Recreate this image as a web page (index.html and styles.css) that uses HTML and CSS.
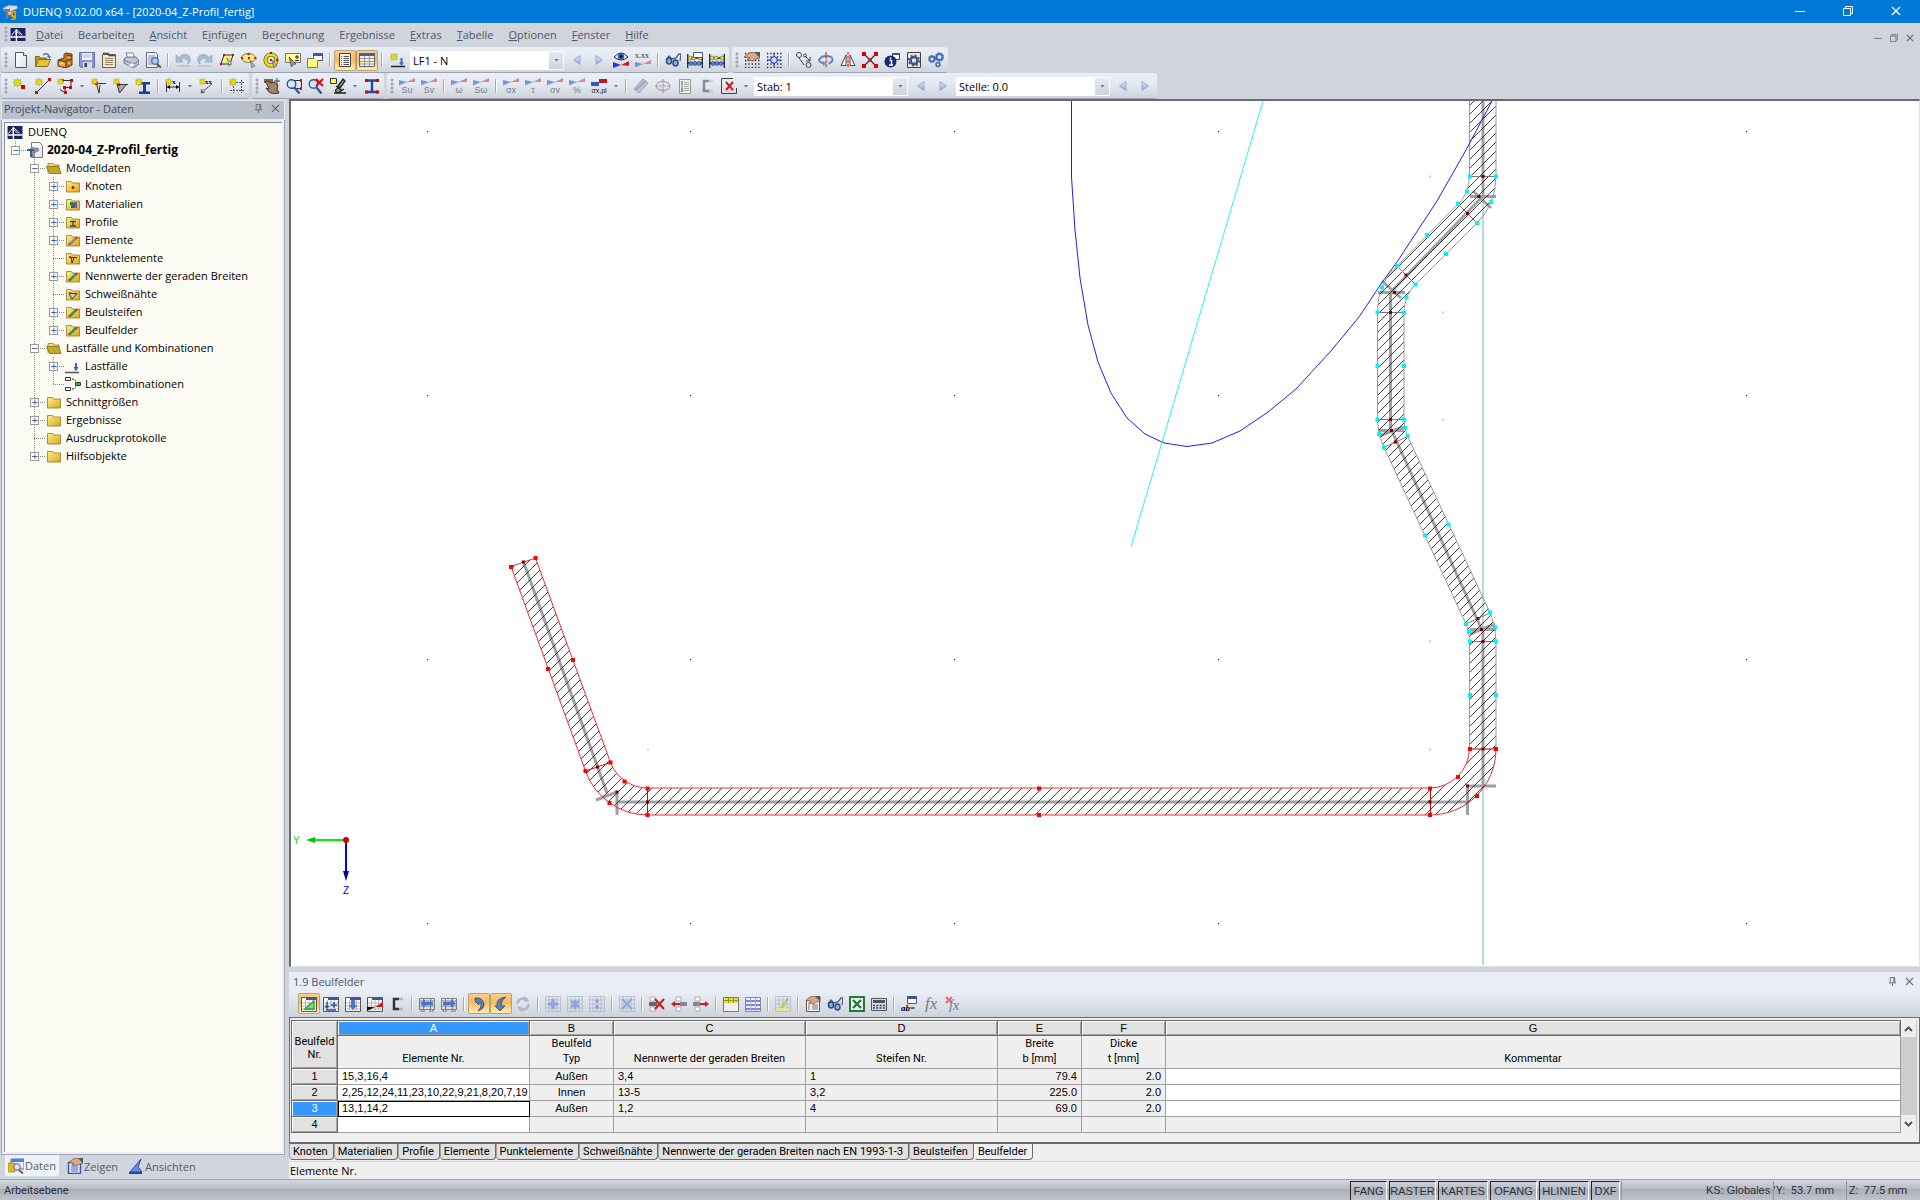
FILE: index.html
```html
<!DOCTYPE html>
<html lang="de">

<head>
    <meta charset="UTF-8">
    <title>DUENQ 9.02.00 x64 - [2020-04_Z-Profil_fertig]</title>
    <link rel="stylesheet" href="styles.css">
</head>

<body>
    <!-- icon shapes -->
    <svg class="sprite" aria-hidden="true">
        <defs>
            <linearGradient id="gold" x1="0" y1="0" x2="1" y2="1">
                <stop offset="0" stop-color="#fff08a" />
                <stop offset="1" stop-color="#d8a818" />
            </linearGradient>
            <linearGradient id="paper" x1="0" y1="0" x2="1" y2="1">
                <stop offset="0" stop-color="#fff" />
                <stop offset="1" stop-color="#dfe3ec" />
            </linearGradient>
            <linearGradient id="blue" x1="0" y1="0" x2="0" y2="1">
                <stop offset="0" stop-color="#e8efff" />
                <stop offset="1" stop-color="#86a2e8" />
            </linearGradient>
        </defs>
        <symbol id="star" viewBox="0 0 8 8"><path d="M4 0 5 2.3 7.2 1 6.2 3.4 8 4 6.2 4.8 7.2 7 5 6 4 8 3 6 .8 7 1.8 4.8 0 4 1.8 3.4.8 1 3 2.3Z" fill="#e8e000" stroke="#8a8a20" stroke-width=".4" /></symbol>
        <symbol id="logo" viewBox="0 0 16 14"><path d="M0 0h16v14H0Z" fill="#1c2266" /><path d="M0 9h16v1.5H0ZM5.5 1h1.5v13H5.5Z" fill="#fff" /><path d="M1 8 6 2v6M7 2l6 6M7 4l4 4" stroke="#fff" fill="none" /></symbol>
        <symbol id="app" viewBox="0 0 16 16"><path d="m1 4 6-3 9 1-1 3-5 2v4H6V7L2 8Z" fill="#d6d9de" stroke="#7d828c" stroke-width=".7" /><path d="M2 5h6v3H6v7H4V8H2Z" fill="#777c88" /><path d="M9 7h5v7q0 2-3 2H9v-1.500h2.500V13H9Zm2 1.500v3h1.500v-3Z" fill="#f0b020" fill-rule="evenodd" stroke="#a06c00" stroke-width=".4" /></symbol>
        <symbol id="new" viewBox="0 0 16 16"><path d="M2.500.500h8l3 3v12h-11Z" fill="url(#paper)" stroke="#555" /><path d="M10.500.500v3h3" fill="#fff" stroke="#555" /></symbol>
        <symbol id="open" viewBox="0 0 16 16"><path d="M.500 14.500v-10h4l1 1.500h6v2" fill="#b59a20" stroke="#857018" /><path d="m.500 14.500 3-7h12l-3 7Z" fill="#ddc445" stroke="#857018" /><path d="M8 3q4-3 6 1" fill="none" stroke="#4a7aa8" stroke-width="1.500" /><path d="M12 4h4l-1.500 3Z" fill="#4a7aa8" /></symbol>
        <symbol id="cabinet" viewBox="0 0 16 16"><path d="m1 8 6-2V2l2-1 6 1v11l-6 3-8-2Z" fill="#c07c28" stroke="#6a3c08" /><path d="m1 8 8 1.500V16M9 3l6 1M9 9l6-2" fill="none" stroke="#6a3c08" /><path d="m2 9.500 6 1v4l-6-1Z" fill="#e8b060" /><path d="M4 11.500h2M11 5.500h2M11 11h2" stroke="#fff3c0" /></symbol>
        <symbol id="save" viewBox="0 0 16 16"><path d="M.500.500h15v15H2l-1.500-1.500Z" fill="#8d93d8" stroke="#666cb4" /><path d="M3 1h10v7H3Z" fill="#f4f4f8" /><path d="M4 3h8M4 5h8" stroke="#bbb" /><path d="M4 10h9v6H4Z" fill="#d5d8e6" /><path d="M5.500 11h2.500v4H5.500Z" fill="#333a66" /></symbol>
        <symbol id="list" viewBox="0 0 16 16"><path d="M1.500 2.500h13v13h-13Z" fill="#f2e5d2" stroke="#74604a" /><path d="M2 1.500h5l1 2h6" stroke="#54483c" fill="none" stroke-width="1.500" /><path d="M4 6.500h8M4 8.500h8M4 10.500h8M4 12.500h8" stroke="#9c8468" /></symbol>
        <symbol id="print" viewBox="0 0 16 16"><path d="M3 1h7l2 6H5Z" fill="#fff" stroke="#667" stroke-width=".8" /><path d="m1 7 3-2h9l3 4v3l-6 4-9-5Z" fill="#c2c5d8" stroke="#555a70" stroke-width=".8" /><path d="m1 8 9 4 6-3M10 12v4" stroke="#555a70" fill="none" stroke-width=".7" /><path d="m5 13 4-2 3 2-3 2.500Z" fill="#fff" stroke="#99a" stroke-width=".5" /></symbol>
        <symbol id="preview" viewBox="0 0 16 16"><path d="M1.500.500h9l2 2v13h-11Z" fill="url(#paper)" stroke="#667" /><path d="M3 4h7M3 6h5M3 8h3M3 10h3M3 12h4" stroke="#98a" /><circle cx="10" cy="9" r="3.300" fill="#a8ccf0" stroke="#3d72ac" stroke-width="1.300" /><path d="m12 12 4 3.500" stroke="#555" stroke-width="2" /></symbol>
        <symbol id="undo" viewBox="0 0 16 16"><path d="M1 3v7h7L5.500 7.500Q9 5 12.500 8 14 10 13 12q4-4 1-8Q9 0 4 5.500Z" fill="#aabcd2" stroke="#8398b2" stroke-width=".6" /><path d="M2 14h13" stroke="#a8b2c0" /></symbol>
        <symbol id="skew" viewBox="0 0 16 16"><path d="M5 3h9l-3 9H2Z" fill="#f4f080" stroke="#333" /><path d="M4 2h2v2H4ZM13 2h2v2h-2ZM1 11h2v2H1ZM10 11h2v2h-2Z" fill="#d00" /><path d="m8 6 5 6-2 .3-1 2Z" fill="#ccc" stroke="#555" stroke-width=".6" /></symbol>
        <symbol id="lasso" viewBox="0 0 16 16"><ellipse cx="7.500" cy="6" rx="7" ry="4.500" fill="#f6ee70" stroke="#777" /><path d="M0 5h2v2H0ZM6.500 1h2v2h-2ZM13.500 5h2v2h-2ZM7 5h2v2H7Z" fill="#e00" /><path d="m9 8 5 6-2 .3-1 1.700Z" fill="#bbb" stroke="#555" stroke-width=".6" /></symbol>
        <symbol id="ring" viewBox="0 0 16 16"><circle cx="8" cy="8" r="5.500" fill="none" stroke="#333" stroke-width="4" /><circle cx="8" cy="8" r="5.500" fill="none" stroke="#efe000" stroke-width="2.800" /><path d="M7 7h2v2H7ZM7 0h2v2H7ZM13 7h2v2h-2Z" fill="#d00" /><path d="m9 8 5 6-2 .3-1 1.700Z" fill="#bbb" stroke="#555" stroke-width=".6" /></symbol>
        <symbol id="pickbox" viewBox="0 0 16 16"><path d="M.500 1.500h15v9H.500Z" fill="#ffff96" stroke="#777" /><path d="M10 5h4M12 3v4M10 8.500h4" stroke="#222" /><path d="m4 5 7 7-3 .3L6.500 15Z" fill="#999" stroke="#333" stroke-width=".7" /></symbol>
        <symbol id="notes" viewBox="0 0 16 16"><path d="M.500 6.500h10v9H.500Z" fill="#ffff80" stroke="#777" /><path d="M6.500 5.500v-4h9v7h-5" fill="#fff" stroke="#555" /><path d="M6 1h10v3H6Z" fill="#3a5f9c" /></symbol>
        <symbol id="doclist" viewBox="0 0 16 16"><path d="M2.500 1.500h11v13h-11Z" fill="#f7f7f0" stroke="#444" /><path d="M4 4.500h1M6.500 4.500H12M4 6.500h1M6.500 6.500H12M4 8.500h1M6.500 8.500H12M4 10.500h1M6.500 10.500H12M4 12.500h1M6.500 12.500H12" stroke="#555" /></symbol>
        <symbol id="tbl" viewBox="0 0 16 16"><path d="M.500 1.500h15v13H.500Z" fill="#f7f2e4" stroke="#666" /><path d="M0 1h16v3H0Z" fill="#3c62a8" /><path d="M1 6.500h14M1 9.500h14M1 12h14M5.500 4v10M10.500 4v10" stroke="#999" /></symbol>
        <symbol id="loadnew" viewBox="0 0 16 16"><use href="#star" x="1" y="1" width="8" height="8" /><path d="M2 14.500h14" stroke="#222" stroke-width="1.500" /><path d="M11.500 6h2v4.500H15L12.500 14 10 10.500h1.500Z" fill="#3a6fd0" /></symbol>
        <symbol id="left" viewBox="0 0 16 16"><path d="M11 3.500v9L4.500 8Z" fill="url(#blue)" stroke="#9aa9cc" /></symbol>
        <symbol id="right" viewBox="0 0 16 16"><path d="M5 3.500v9L11.500 8Z" fill="url(#blue)" stroke="#9aa9cc" /></symbol>
        <symbol id="ramp" viewBox="0 0 16 16"><path d="M0 2v5.500L8 4Z" fill="#6d96d8" /><path d="M16 0v4H8Z" fill="#e08080" /><path d="M0 6.500 16 1.500" stroke="#aaa" stroke-width=".5" /></symbol>
        <symbol id="eye" viewBox="0 0 16 16"><path d="M1 5q7-8 14 0-7 6-14 0Z" fill="#eef" stroke="#222" /><circle cx="8" cy="4.500" r="3.200" fill="#2a62c0" /><circle cx="8" cy="4.500" r="1.300" /><path d="M0 10v6l8-3Z" fill="#1b3fd8" /><path d="M16 9v5l-8-1Z" fill="#d81818" /></symbol>
        <symbol id="glasses" viewBox="0 0 16 16"><path d="m1 8 3-4 3 3 4-1 3-4h2l-1 7" fill="none" stroke="#4b5d86" stroke-width="1.300" /><ellipse cx="4" cy="9" rx="2.500" ry="3" fill="#8eaee8" stroke="#33487c" stroke-width="1.500" /><ellipse cx="10.500" cy="11" rx="2.500" ry="3" fill="#8eaee8" stroke="#33487c" stroke-width="1.500" /></symbol>
        <symbol id="abacus" viewBox="0 0 16 16"><path d="M.750 2v14M15.250 2v14M0 6h16M0 11h16" stroke="#222" stroke-width="1.300" fill="none" /><circle cx="3" cy="6" r="2" fill="#ecd860" stroke="#665a10" stroke-width=".6" /><circle cx="7" cy="6" r="2" fill="#ecd860" stroke="#665a10" stroke-width=".6" /><circle cx="13" cy="6" r="2" fill="#ecd860" stroke="#665a10" stroke-width=".6" /><circle cx="4" cy="11.500" r="2" fill="#5f86dc" stroke="#1c3478" stroke-width=".6" /><circle cx="8" cy="11.500" r="2" fill="#5f86dc" stroke="#1c3478" stroke-width=".6" /><circle cx="12" cy="11.500" r="2" fill="#5f86dc" stroke="#1c3478" stroke-width=".6" /></symbol>
        <symbol id="dots" viewBox="0 0 16 16"><path d="M1 1.500h15M1 5h15M1 8.500h15M1 12h15M1 15.300h15" stroke="#222" stroke-width="1.300" stroke-dasharray="1.300 2" /></symbol>
        <symbol id="hand" viewBox="0 0 16 9"><path d="m0 5 5-4 5-1 6 1v5l-4 1-4 2-5-1 3-2Z" fill="#dba980" stroke="#604028" stroke-width=".7" /><path d="M10 0h6v6Z" fill="#555" /></symbol>
        <symbol id="griphand" viewBox="0 0 16 16"><use href="#dots" /><use href="#hand" width="16" height="9" /></symbol>
        <symbol id="snap" viewBox="0 0 16 16"><use href="#dots" /><path d="M8 1v14M1 8h14" stroke="#1a2ecc" /><circle cx="8" cy="8" r="3.300" fill="#cfd8ff" stroke="#1a2ecc" /></symbol>
        <symbol id="copy" viewBox="0 0 16 16"><circle cx="3" cy="3" r="2.500" fill="none" stroke="#444" /><circle cx="9" cy="3.500" r="1.500" fill="none" stroke="#444" /><circle cx="12.500" cy="13" r="2.500" fill="none" stroke="#444" /><path d="m9 4 5 5M14 5v4h-4M3 6l5 7" stroke="#444" fill="none" /></symbol>
        <symbol id="rotate" viewBox="0 0 16 16"><path d="M6 11.500Q0 10 1.500 7 4 3.500 9 4q6 .5 5.500 4-.5 2.500-4 3.500" fill="none" stroke="#6088c8" stroke-width="2" /><path d="M8 0v16" stroke="#e00" stroke-dasharray="3 1" /><path d="m5 9 3 2.500L5 14Z" fill="#6088c8" /></symbol>
        <symbol id="mirror" viewBox="0 0 16 16"><path d="M6 3v10.500H1ZM10 3v10.500h5Z" fill="#fff" stroke="#444" /><path d="M8 0v16" stroke="#e00" stroke-dasharray="3 1" /></symbol>
        <symbol id="cross" viewBox="0 0 16 16"><path d="m2 2 12 12M14 2 2 14" stroke="#333" stroke-width="1.300" /><path d="M0 0h4v4H0ZM12 0h4v4h-4ZM0 12h4v4H0ZM12 12h4v4h-4ZM6.500 6.500h3v3h-3Z" fill="#d00" /></symbol>
        <symbol id="info" viewBox="0 0 16 16"><path d="M8.500 1.500h7v6h-7Z" fill="#fff" stroke="#345" /><path d="M8 1h8v2H8Z" fill="#3b5b90" /><circle cx="6.500" cy="9.500" r="6" fill="#182878" /><path d="M5.500 8.500h2V13M5 13h4M6.500 5.500v1.700" stroke="#fff" stroke-width="1.500" /></symbol>
        <symbol id="gear" viewBox="0 0 16 16"><path d="M1.500.500h13v15h-13Z" fill="#f2e5d0" stroke="#443" /><circle cx="8" cy="8.500" r="3.500" fill="none" stroke="#36579a" stroke-width="2.600" /><circle cx="8" cy="8.500" r="5.300" fill="none" stroke="#36579a" stroke-width="1.600" stroke-dasharray="2 2.150" /></symbol>
        <symbol id="gears" viewBox="0 0 16 16"><g fill="none" stroke="#4169b4"><circle cx="4" cy="7" r="2.500" stroke-width="1.800" /><circle cx="11.500" cy="5" r="3" stroke-width="2" /><circle cx="10" cy="12.500" r="2" stroke-width="1.600" /><circle cx="4" cy="7" r="3.600" stroke-dasharray="1.500 1.500" /><circle cx="11.500" cy="5" r="4.300" stroke-dasharray="1.500 1.500" /></g></symbol>

        <symbol id="node" viewBox="0 0 16 16"><use href="#star" width="9" height="9" /><path d="M8 7h4v4H8Z" fill="#d40000" /></symbol>
        <symbol id="line" viewBox="0 0 16 16"><path d="m2 14 12-12" stroke="#333" /><path d="M13 0h3v3h-3ZM0 13h3v3H0Z" fill="#d00" /><use href="#star" width="8" height="8" /></symbol>
        <symbol id="poly" viewBox="0 0 16 16"><path d="M5 2.500h9v7H8v5l-5-3" fill="none" stroke="#333" /><path d="M4 1h3v3H4ZM13 1h3v3h-3ZM12 8h3v3h-3ZM6 8h3v3H6ZM7 13h3v3H7Z" fill="#d00" /><use href="#star" width="7" height="7" /></symbol>
        <symbol id="point" viewBox="0 0 16 16"><path d="M2 5.500h13M5 4l3 11 1-8" fill="none" stroke="#333" /><path d="M4 4h3v3H4Z" fill="#d00" /><use href="#star" width="7" height="7" /></symbol>
        <symbol id="weld" viewBox="0 0 16 16"><path d="M4 6.500h11M4 6l2.500 9L13 7" fill="#aaa" stroke="#333" /><path d="M4 5h3v3H4Z" fill="#d00" /><use href="#star" width="7" height="7" /></symbol>
        <symbol id="ibeam" viewBox="0 0 16 16"><path d="M4 4h11v2.500h-4v7h4V16H4v-2.500h4v-7H4Z" fill="#1d3f9c" /><use href="#star" width="8" height="8" /></symbol>
        <symbol id="dim" viewBox="0 0 16 16"><path d="M1.500 4v10M14.500 4v10M2 9h12" stroke="#333" /><path d="m2 9 3-2v4ZM14 9l-3-2v4Z" /><use href="#star" width="7" height="7" /></symbol>
        <symbol id="coord" viewBox="0 0 16 16"><path d="M3 14 13 6M2 15l1-4M2 15l4-1" stroke="#555" /><use href="#star" width="7" height="7" /></symbol>
        <symbol id="frame" viewBox="0 0 16 16"><path d="M4.500 2v13M12.500 2v13M1 4.500h15M1 12.500h15" stroke="#555" stroke-dasharray="2 1" /><use href="#star" width="8" height="8" /></symbol>
        <symbol id="pan" viewBox="0 0 16 16"><path d="M0 1h9v4H0Z" fill="#7b6a54" /><path d="M3 6 1 4l3-1 3 2 3-1 4 3-1 4 2 4-6 1-4-2-3-4 3 1Z" fill="#a08468" stroke="#403428" /><path d="M10 3h6M13 0v6" stroke="#444" /></symbol>
        <symbol id="zoomw" viewBox="0 0 16 16"><path d="M4.500 2.500h11v8h-11Z" fill="none" stroke="#333" /><path d="M14 1h2v3h-2ZM14 9h2v3h-2Z" fill="#b22" /><circle cx="5.500" cy="6" r="4.300" fill="#d5e4ff" stroke="#3552a0" stroke-width="1.400" /><path d="m8.500 9.500 5 6" stroke="#3552a0" stroke-width="2.300" /></symbol>
        <symbol id="zoomx" viewBox="0 0 16 16"><circle cx="5.500" cy="6" r="4.300" fill="#d5e4ff" stroke="#3552a0" stroke-width="1.400" /><path d="m8.500 9.500 5 6" stroke="#3552a0" stroke-width="2.300" /><path d="m8 1 7 7M15 1 8 8" stroke="#d01010" stroke-width="2" /></symbol>
        <symbol id="view" viewBox="0 0 16 16"><path d="M.500.500h6v5h-6Z" fill="#ffff40" stroke="#333" /><path d="m8 8 5-7 2 2-5 7ZM6 8l5 4M4 15h12M8 10q-5 3 0 5l6-4" fill="#999" stroke="#222" stroke-width="1.300" /></symbol>
        <symbol id="ired" viewBox="0 0 16 16"><path d="M2 2.500h12M2 14h12M8 2v12" stroke="#24479c" stroke-width="2.400" /><path d="M1 1h3v3H1ZM12 1h3v3h-3ZM1 12.500h3v3H1ZM12 12.500h3v3h-3Z" fill="#d00" /></symbol>
        <symbol id="stress" viewBox="0 0 16 16"><path d="M0 4h8v4H0Z" fill="#2c59c4" /><path d="M8 1h8v4H8Z" fill="#c41818" /></symbol>
        <symbol id="bar" viewBox="0 0 16 16"><path d="m1 11 9-10 5 4-9 10Z" fill="#b4c4de" stroke="#99a2b2" /><path d="m3 12 9-9" stroke="#d08888" stroke-width="1.500" /></symbol>
        <symbol id="ellipse" viewBox="0 0 16 16"><ellipse cx="8" cy="8" rx="7" ry="4.500" fill="none" stroke="#8d93a0" /><path d="M0 8h16M8 1v14" stroke="#d0848a" stroke-dasharray="3 1" /></symbol>
        <symbol id="legend" viewBox="0 0 16 16"><path d="M2.500 1.500h11v14h-11Z" fill="#eee" stroke="#999" /><path d="M4 3h2v3H4Z" fill="#d88" /><path d="M4 6h2v4H4Z" fill="#8c8" /><path d="M4 10h2v4H4Z" fill="#88d" /><path d="M7 4.500h5M7 6.500h5M7 8.500h5M7 10.500h5M7 12.500h5" stroke="#aaa" /></symbol>
        <symbol id="channel" viewBox="0 0 16 16"><path d="M10 3H5v10h5" fill="none" stroke="#333" stroke-width="2.500" /><path d="M10 3h4M10 13h4" stroke="#b5b5a8" stroke-width="2.500" /></symbol>
        <symbol id="boxx" viewBox="0 0 16 16"><path d="M12 .500H.500v15h15V10" fill="none" stroke="#444" /><path d="m5 4 7 8M12 4l-7 8" stroke="#cc1c1c" stroke-width="2" /></symbol>

        <symbol id="folder" viewBox="0 0 16 16"><path d="M1.500 3.500h5l1 1.500h7v9h-13Z" fill="url(#gold)" stroke="#8f7a22" stroke-width=".8" /></symbol>
        <symbol id="folderopen" viewBox="0 0 16 16"><path d="M2 13V3.500h5L8 5h5v8" fill="#f0dc70" stroke="#8f7a22" stroke-width=".8" /><path d="M.500 6.500h12l2.500 7H3.500Z" fill="#c4a82c" stroke="#7c6818" stroke-width=".8" /></symbol>
        <symbol id="model" viewBox="0 0 16 16"><path d="M4.500.500h8l3 3v12h-11Z" fill="url(#paper)" stroke="#777" /><path d="m1 8 4-3 7 1v3l-4 2v4H5V9Z" fill="#888d99" /><path d="M0 7h7v2H5v6H3V9H0Z" fill="#3a5c9c" /></symbol>
        <symbol id="combi" viewBox="0 0 16 16"><path d="M.500 1.500h5v3h-5ZM.500 11.500h5v3h-5Z" fill="#fff" stroke="#333" /><path d="M7 3q4 0 4 3M7 13q4 0 4-3" fill="none" stroke="#333" stroke-dasharray="2 1" /><path d="M10.500 6.500h5v3h-5Z" fill="#2fb04a" stroke="#145a20" /></symbol>

        <symbol id="sheet" viewBox="0 0 16 16"><path d="M.500 1.500h15v14H.500Z" fill="#fff" stroke="#555" /><path d="M1 7h14M1 10h14M1 13h14M4.500 4v12M8 4v12M11.500 4v12" stroke="#999" stroke-width=".7" /><path d="M5 1h11v3H5Z" fill="#3c5a9a" /></symbol>
        <symbol id="s-edit" viewBox="0 0 16 16"><use href="#sheet" /><path d="M4 13 13 5v8Z" fill="#7fe070" stroke="#2f9a38" stroke-width="1.300" /></symbol>
        <symbol id="s-num" viewBox="0 0 16 16"><use href="#sheet" /><path d="M4 6v6M2 10l2 2 2-2M8 9h6M11 6v6M3 14h10" stroke="#2b52a4" stroke-width="1.500" fill="none" /></symbol>
        <symbol id="s-down" viewBox="0 0 16 16"><use href="#sheet" /><path d="M6 4h4v5h2.500L8 14 3.500 9H6Z" fill="#4a72c8" /></symbol>
        <symbol id="s-ramp" viewBox="0 0 16 16"><use href="#sheet" /><path d="M0 11v4l8-4Z" fill="#111" /><path d="M16 6v5H8Z" fill="#d41818" /></symbol>
        <symbol id="s-left" viewBox="0 0 16 16"><path d="M.500 2.500h15v11H.500ZM1 5h14M1 10h14M4.500 3v10M11.500 3v10M2 14v2h3v-2M11 14v2h3v-2" fill="none" stroke="#666" stroke-width=".8" /><path d="m1 7.500 5-4V6h8v3H6v2.500Z" fill="#4a74d4" /></symbol>
        <symbol id="s-right" viewBox="0 0 16 16"><path d="M.500 2.500h15v11H.500ZM1 5h14M1 10h14M4.500 3v10M11.500 3v10M2 14v2h3v-2M11 14v2h3v-2" fill="none" stroke="#666" stroke-width=".8" /><path d="m15 7.500-5-4V6H2v3h8v2.500Z" fill="#4a74d4" /></symbol>
        <symbol id="arcr" viewBox="0 0 16 16"><path d="M4 2h4q5 2 5 7 0 4-6 6 4-4 3-8L8 6v3L4 5Z" fill="#5c80b0" stroke="#28477a" stroke-width=".8" /></symbol>
        <symbol id="arcl" viewBox="0 0 16 16"><path d="M13 1Q3 2 4 10H2l5 5 5-5H9Q7 5 13 1Z" fill="#5c80b0" stroke="#28477a" stroke-width=".8" /></symbol>
        <symbol id="sync" viewBox="0 0 16 16"><circle cx="8" cy="8" r="5.500" fill="none" stroke="#a8b8d4" stroke-width="2.500" stroke-dasharray="14 3.200" /><path d="m9 0 4 3-4 3ZM7 10v6l-4-3Z" fill="#a8b8d4" /></symbol>
        <symbol id="s-dim" viewBox="0 0 16 16"><path d="M.500.500h15v15H.500ZM1 4h14M1 8h14M1 12h14M4 1v14M8 1v14M12 1v14" fill="none" stroke="#b2b7c2" stroke-width=".8" /></symbol>
        <symbol id="d-plus" viewBox="0 0 16 16"><use href="#s-dim" /><path d="M8 3v10M3 8h10" stroke="#8ea4e4" stroke-width="3.500" /></symbol>
        <symbol id="d-star" viewBox="0 0 16 16"><use href="#s-dim" /><path d="m4 5 8 6M12 5l-8 6M8 4v9" stroke="#8ea4e4" stroke-width="2.500" /></symbol>
        <symbol id="d-dots" viewBox="0 0 16 16"><use href="#s-dim" /><circle cx="8" cy="5" r="2" fill="#8ea4e4" /><circle cx="8" cy="11" r="2" fill="#8ea4e4" /></symbol>
        <symbol id="d-x" viewBox="0 0 16 16"><use href="#s-dim" /><path d="m3 3 10 10M13 3 3 13" stroke="#8ea4e4" stroke-width="2" /></symbol>
        <symbol id="r-x" viewBox="0 0 16 16"><path d="M1 1h5v4H1ZM1 11h5v4H1Z" fill="#fff" stroke="#aaa" /><path d="M0 6h8v4H0Z" fill="#666" /><path d="m6 3 9 10M15 3 6 13" stroke="#cc1818" stroke-width="2" /></symbol>
        <symbol id="r-left" viewBox="0 0 16 16"><path d="M5 1h5v4H5ZM5 11h5v4H5Z" fill="#fff" stroke="#aaa" /><path d="M9 6h7v4H9Z" fill="#888" /><path d="m0 8 4-3v2h5v2H4v2Z" fill="#d01818" /></symbol>
        <symbol id="r-right" viewBox="0 0 16 16"><path d="M2 1h5v4H2ZM2 11h5v4H2Z" fill="#fff" stroke="#aaa" /><path d="M0 6h7v4H0Z" fill="#888" /><path d="m16 8-4-3v2H7v2h5v2Z" fill="#d01818" /></symbol>
        <symbol id="y-head" viewBox="0 0 16 16"><path d="M.500 1.500h15v14H.500Z" fill="#f0f0f0" stroke="#777" /><path d="M1 2h14v5H1Z" fill="#e8de40" /><path d="M1 4.500h14M5.500 2v5M10.500 2v5" stroke="#9a9220" /></symbol>
        <symbol id="b-rows" viewBox="0 0 16 16"><path d="M.500 1.500h15v14H.500Z" fill="#eef" stroke="#888" /><path d="M1 5h14M1 9h14M1 13h14" stroke="#7b86dc" stroke-width="2" /><path d="M5.500 2v13M10.500 2v13" stroke="#a8aee4" /></symbol>
        <symbol id="s-pen" viewBox="0 0 16 16"><use href="#s-dim" /><path d="M1 12h14v3H1Z" fill="#e6e3a0" /><path d="m13 2-4 8-3 2 2-4 5-6Z" fill="#e8d840" stroke="#aaa460" stroke-width=".6" /></symbol>
        <symbol id="handlist" viewBox="0 0 16 16"><path d="M1.500 4.500h13v11h-13Z" fill="#fff" stroke="#555" /><path d="M3 9h2M7 9h6M3 11h2M7 11h6M3 13h2M7 13h6" stroke="#666" /><use href="#hand" width="16" height="8" /></symbol>
        <symbol id="excel" viewBox="0 0 16 16"><path d="M1 1h14v14H1Z" fill="#eef7ee" stroke="#1e7a34" stroke-width="2" /><path d="m4 4 8 8M12 4l-8 8" stroke="#1e7a34" stroke-width="2.400" /></symbol>
        <symbol id="calc" viewBox="0 0 16 16"><path d="M.500 2.500h15v12H.500Z" fill="#d8dbe2" stroke="#555" /><path d="M2 4h12v3H2Z" fill="#4c5468" /><path d="M2 9.500h12M2 12h12" stroke="#333c60" stroke-width="1.500" stroke-dasharray="2 1.300" /></symbol>
        <symbol id="win" viewBox="0 0 16 16"><path d="M6.500.500h9v7h-9Z" fill="#fff" stroke="#555" /><path d="M6 0h10v3H6Z" fill="#3c5a9a" /></symbol>

        <symbol id="nav-data" viewBox="0 0 16 16"><path d="M3 1h13v10H3Z" fill="#e8f0ff" stroke="#4a78c8" /><path d="M3 1h13v3H3Z" fill="#4a82dc" /><path d="M0 5h7v9H0Z" fill="#e6b820" stroke="#9a7810" stroke-width=".6" /><circle cx="9" cy="9" r="3.300" fill="#cfe6fa" stroke="#666" /><path d="m11 12 4 3.500" stroke="#8c5c28" stroke-width="2" /></symbol>
        <symbol id="nav-show" viewBox="0 0 16 16"><path d="M1.500 4.500h12v11h-12Z" fill="#dce8ff" stroke="#345ea8" stroke-width="1.500" /><path d="M4 9h7M4 11h7M4 13h7" stroke="#4a72b8" /><use href="#hand" x="2" width="14" height="8" /></symbol>
        <symbol id="nav-view" viewBox="0 0 16 16"><path d="M2 14h12L10 9l3-8-5 6-5 6Z" fill="#6c8ee0" stroke="#27489c" /><path d="M1 15h13" stroke="#27489c" stroke-width="2" /></symbol>
        <symbol id="pin" viewBox="0 0 10 10"><path d="M2.500 6V.500h5V6M6.500 1v5M1 6.500h8M5 7v3" fill="none" stroke="#666" /></symbol>
        <symbol id="close" viewBox="0 0 10 10"><path d="m1 1 8 8M9 1 1 9" fill="none" stroke="currentColor" stroke-width="1.300" /></symbol>
        <symbol id="restore" viewBox="0 0 10 10"><path d="M.500 2.500h7v7h-7ZM2.500 2V.500h7v7H8" fill="none" stroke="currentColor" /></symbol>
        <symbol id="minimize" viewBox="0 0 10 10"><path d="M0 5.500h10" stroke="currentColor" /></symbol>
    </svg>

    <header class="titlebar">
        <svg class="icon"><use href="#app" /></svg>
        <h1>DUENQ 9.02.00 x64 - [2020-04_Z-Profil_fertig]</h1>
        <div class="window-buttons">
            <button aria-label="Minimieren"><svg><use href="#minimize" /></svg></button>
            <button aria-label="Wiederherstellen"><svg><use href="#restore" /></svg></button>
            <button aria-label="Schließen"><svg><use href="#close" /></svg></button>
        </div>
    </header>

    <nav class="menubar">
        <span class="grip"></span>
        <svg class="logo"><use href="#logo" /></svg>
        <button><u>D</u>atei</button>
        <button>Bearbeite<u>n</u></button>
        <button><u>A</u>nsicht</button>
        <button>E<u>i</u>nfügen</button>
        <button>Be<u>r</u>echnung</button>
        <button>Er<u>g</u>ebnisse</button>
        <button><u>E</u>xtras</button>
        <button><u>T</u>abelle</button>
        <button><u>O</u>ptionen</button>
        <button><u>F</u>enster</button>
        <button><u>H</u>ilfe</button>
        <div class="mdi-buttons">
            <button aria-label="Fenster minimieren"><svg><use href="#minimize" /></svg></button>
            <button aria-label="Fenster wiederherstellen"><svg><use href="#restore" /></svg></button>
            <button aria-label="Fenster schließen"><svg><use href="#close" /></svg></button>
        </div>
    </nav>

    <div class="toolrow">
        <div class="toolbar">
            <span class="grip"></span>
            <button class="tool" aria-label="Neu"><svg class="icon"><use href="#new" /></svg></button>
            <button class="tool" aria-label="Öffnen"><svg class="icon"><use href="#open" /></svg></button>
            <button class="tool" aria-label="Projektmanager"><svg class="icon"><use href="#cabinet" /></svg></button>
            <button class="tool" aria-label="Speichern"><svg class="icon"><use href="#save" /></svg></button>
            <button class="tool" aria-label="Protokoll"><svg class="icon"><use href="#list" /></svg></button>
            <button class="tool" aria-label="Drucken"><svg class="icon"><use href="#print" /></svg></button>
            <button class="tool" aria-label="Vorschau"><svg class="icon"><use href="#preview" /></svg></button>
            <span class="sep"></span>
            <button class="tool" aria-label="Rückgängig"><svg class="icon"><use href="#undo" /></svg></button>
            <button class="tool" aria-label="Wiederholen"><svg class="icon flip"><use href="#undo" /></svg></button>
            <button class="tool" aria-label="Auswahl Raute"><svg class="icon"><use href="#skew" /></svg></button>
            <button class="tool" aria-label="Auswahl Ellipse"><svg class="icon"><use href="#lasso" /></svg></button>
            <button class="tool" aria-label="Auswahl Ring"><svg class="icon"><use href="#ring" /></svg></button>
            <button class="tool" aria-label="Selektion"><svg class="icon"><use href="#pickbox" /></svg></button>
            <button class="tool" aria-label="Fenster"><svg class="icon"><use href="#notes" /></svg></button>
            <span class="sep"></span>
            <button class="tool on" aria-label="Navigator"><svg class="icon"><use href="#doclist" /></svg></button>
            <button class="tool on" aria-label="Tabelle"><svg class="icon"><use href="#tbl" /></svg></button>
            <span class="sep"></span>
            <button class="tool" aria-label="Neuer Lastfall"><svg class="icon"><use href="#loadnew" /></svg></button>
            <div class="combo"><select aria-label="Lastfall"><option>LF1 - N</option></select></div>
            <button class="tool" aria-label="Vorheriger Lastfall"><svg class="icon"><use href="#left" /></svg></button>
            <button class="tool" aria-label="Nächster Lastfall"><svg class="icon"><use href="#right" /></svg></button>
            <button class="tool" aria-label="Ergebnisse"><svg class="icon"><use href="#eye" /></svg></button>
            <button class="tool" aria-label="Werte"><svg class="icon" viewBox="0 0 16 16"><text x="0" y="6" class="svg-val">x.xx</text><use href="#ramp" y="8" width="16" height="16" /></svg></button>
            <span class="sep"></span>
            <button class="tool" aria-label="Anzeige"><svg class="icon"><use href="#glasses" /></svg></button>
            <button class="tool" aria-label="Berechnung"><svg class="icon" viewBox="0 0 16 16"><use href="#abacus" /><path d="M6.500.500h9v5h-9Z" fill="#fff" stroke="#456" /></svg></button>
            <button class="tool" aria-label="Alles berechnen"><svg class="icon"><use href="#abacus" /></svg></button>
        </div>
        <div class="toolbar">
            <span class="grip"></span>
            <button class="tool" aria-label="Raster"><svg class="icon"><use href="#griphand" /></svg></button>
            <button class="tool" aria-label="Fang"><svg class="icon"><use href="#snap" /></svg></button>
            <span class="sep"></span>
            <button class="tool" aria-label="Kopieren"><svg class="icon"><use href="#copy" /></svg></button>
            <button class="tool" aria-label="Drehen"><svg class="icon"><use href="#rotate" /></svg></button>
            <button class="tool" aria-label="Spiegeln"><svg class="icon"><use href="#mirror" /></svg></button>
            <button class="tool" aria-label="Verbinden"><svg class="icon"><use href="#cross" /></svg></button>
            <button class="tool" aria-label="Info"><svg class="icon"><use href="#info" /></svg></button>
            <button class="tool" aria-label="Einstellungen"><svg class="icon"><use href="#gear" /></svg></button>
            <button class="tool" aria-label="Optionen"><svg class="icon"><use href="#gears" /></svg></button>
        </div>
    </div>

    <div class="toolrow">
        <div class="toolbar">
            <span class="grip"></span>
            <button class="tool" aria-label="Knoten"><svg class="icon"><use href="#node" /></svg></button>
            <button class="tool" aria-label="Element"><svg class="icon"><use href="#line" /></svg></button>
            <button class="tool" aria-label="Polylinie"><svg class="icon"><use href="#poly" /></svg></button>
            <button class="drop" aria-label="Weitere Elemente"></button>
            <button class="tool" aria-label="Punktelement"><svg class="icon"><use href="#point" /></svg></button>
            <button class="tool" aria-label="Schweißnaht"><svg class="icon"><use href="#weld" /></svg></button>
            <button class="tool" aria-label="Profil"><svg class="icon"><use href="#ibeam" /></svg></button>
            <span class="sep"></span>
            <button class="tool" aria-label="Bemaßung"><svg class="icon" viewBox="0 0 16 16"><use href="#dim" /><text x="7" y="6" class="svg-small">x</text></svg></button>
            <button class="drop" aria-label="Weitere Bemaßungen"></button>
            <button class="tool" aria-label="Kommentar"><svg class="icon" viewBox="0 0 16 16"><use href="#coord" /><text x="6" y="6" class="svg-small">xx</text></svg></button>
            <span class="sep"></span>
            <button class="tool" aria-label="Hilfslinie"><svg class="icon"><use href="#frame" /></svg></button>
        </div>
        <div class="toolbar">
            <span class="grip"></span>
            <button class="tool" aria-label="Verschieben"><svg class="icon"><use href="#pan" /></svg></button>
            <button class="tool" aria-label="Zoom"><svg class="icon"><use href="#zoomw" /></svg></button>
            <button class="tool" aria-label="Zoom aus"><svg class="icon"><use href="#zoomx" /></svg></button>
            <button class="tool" aria-label="Ansicht"><svg class="icon"><use href="#view" /></svg></button>
            <button class="drop" aria-label="Weitere Ansichten"></button>
            <button class="tool" aria-label="Querschnitt"><svg class="icon"><use href="#ired" /></svg></button>
        </div>
        <div class="toolbar">
            <span class="grip"></span>
            <button class="tool" aria-label="Su"><svg class="icon" viewBox="0 0 16 16"><use href="#ramp" /><text x="8" y="15" class="svg-res">Su</text></svg></button>
            <button class="tool" aria-label="Sv"><svg class="icon" viewBox="0 0 16 16"><use href="#ramp" /><text x="8" y="15" class="svg-res">Sv</text></svg></button>
            <span class="sep"></span>
            <button class="tool" aria-label="Omega"><svg class="icon" viewBox="0 0 16 16"><use href="#ramp" /><text x="8" y="15" class="svg-res">ω</text></svg></button>
            <button class="tool" aria-label="S omega"><svg class="icon" viewBox="0 0 16 16"><use href="#ramp" /><text x="8" y="15" class="svg-res">Sω</text></svg></button>
            <span class="sep"></span>
            <button class="tool" aria-label="Sigma x"><svg class="icon" viewBox="0 0 16 16"><use href="#ramp" /><text x="8" y="15" class="svg-res">σx</text></svg></button>
            <button class="tool" aria-label="Tau"><svg class="icon" viewBox="0 0 16 16"><use href="#ramp" /><text x="8" y="15" class="svg-res">τ</text></svg></button>
            <button class="tool" aria-label="Sigma v"><svg class="icon" viewBox="0 0 16 16"><use href="#ramp" /><text x="8" y="15" class="svg-res">σv</text></svg></button>
            <button class="tool" aria-label="Ausnutzung"><svg class="icon" viewBox="0 0 16 16"><use href="#ramp" /><text x="8" y="15" class="svg-res">%</text></svg></button>
            <button class="tool" aria-label="Sigma x plastisch"><svg class="icon" viewBox="0 0 16 16"><use href="#stress" /><text x="8" y="15" class="svg-res dark">σx,pl</text></svg></button>
            <button class="drop" aria-label="Weitere Spannungen"></button>
            <span class="sep"></span>
            <button class="tool" aria-label="Stab"><svg class="icon"><use href="#bar" /></svg></button>
            <button class="tool" aria-label="Kernfläche"><svg class="icon"><use href="#ellipse" /></svg></button>
            <button class="tool" aria-label="Legende"><svg class="icon"><use href="#legend" /></svg></button>
            <button class="tool faded" aria-label="Wirksam"><svg class="icon"><use href="#channel" /></svg></button>
            <button class="tool" aria-label="Ausblenden"><svg class="icon"><use href="#boxx" /></svg></button>
            <button class="drop" aria-label="Weitere Optionen"></button>
            <div class="combo"><select aria-label="Stab"><option>Stab: 1</option></select></div>
            <button class="tool" aria-label="Vorheriger Stab"><svg class="icon"><use href="#left" /></svg></button>
            <button class="tool" aria-label="Nächster Stab"><svg class="icon"><use href="#right" /></svg></button>
            <div class="combo"><select aria-label="Stelle"><option>Stelle: 0.0</option></select></div>
            <button class="tool" aria-label="Vorherige Stelle"><svg class="icon"><use href="#left" /></svg></button>
            <button class="tool" aria-label="Nächste Stelle"><svg class="icon"><use href="#right" /></svg></button>
        </div>
    </div>

    <main class="workspace">
        <aside class="navigator">
            <div class="nav-head">
                <h2>Projekt-Navigator - Daten</h2>
                <button aria-label="Anheften"><svg><use href="#pin" /></svg></button>
                <button aria-label="Navigator schließen"><svg><use href="#close" /></svg></button>
            </div>
            <div class="nav-frame">
                <div class="tree">
                    <div class="root"><svg class="logo"><use href="#logo" /></svg>DUENQ</div>
                    <ul>
                        <li>
                            <div class="row"><button class="toggle" aria-label="Zuklappen">−</button><svg class="icon"><use href="#model" /></svg><strong>2020-04_Z-Profil_fertig</strong></div>
                            <ul>
                                <li>
                                    <div class="row"><button class="toggle" aria-label="Zuklappen">−</button><svg class="icon"><use href="#folderopen" /></svg>Modelldaten</div>
                                    <ul>
                                        <li><div class="row"><button class="toggle" aria-label="Aufklappen">+</button><svg class="icon" viewBox="0 0 16 16"><use href="#folder" /><circle cx="8" cy="9.500" r="1.500" fill="#d00" /></svg>Knoten</div></li>
                                        <li><div class="row"><button class="toggle" aria-label="Aufklappen">+</button><svg class="icon" viewBox="0 0 16 16"><use href="#folder" /><path d="M5 6h3v3H5Z" fill="#238a2c" /><path d="M6 9h3v3H6Z" fill="#2456c8" /><path d="M9 6h3v6H9Z" fill="#5b60c8" /><path d="M8 7h2v2H8Z" fill="#d22" /></svg>Materialien</div></li>
                                        <li><div class="row"><button class="toggle" aria-label="Aufklappen">+</button><svg class="icon" viewBox="0 0 16 16"><use href="#folder" /><path d="M5 7.500h6M5 12h6M8 7v5" stroke="#345" stroke-width="1.300" /></svg>Profile</div></li>
                                        <li><div class="row"><button class="toggle" aria-label="Aufklappen">+</button><svg class="icon" viewBox="0 0 16 16"><use href="#folder" /><path d="m5 12 6-6" stroke="#888" stroke-width="2.500" /><path d="M3.500 11h2v2h-2ZM10.500 5h2v2h-2Z" fill="#d22" /></svg>Elemente</div></li>
                                        <li><div class="row"><span class="no-toggle"></span><svg class="icon" viewBox="0 0 16 16"><use href="#folder" /><path d="M4 7.500h8M6 7l1 6 2-5" stroke="#333" fill="none" /><path d="M4 6h2v2H4Z" fill="#d22" /></svg>Punktelemente</div></li>
                                        <li><div class="row"><button class="toggle" aria-label="Aufklappen">+</button><svg class="icon" viewBox="0 0 16 16"><use href="#folder" /><path d="m5 12 6-6" stroke="#2f9a58" stroke-width="2.500" /><path d="M3.500 11h2v2h-2ZM10.500 5h2v2h-2Z" fill="#d22" /></svg>Nennwerte der geraden Breiten</div></li>
                                        <li><div class="row"><span class="no-toggle"></span><svg class="icon" viewBox="0 0 16 16"><use href="#folder" /><path d="M4 7.500h8L7 13Z" stroke="#333" fill="#ccc" /><path d="M4 6h2v2H4Z" fill="#d22" /></svg>Schweißnähte</div></li>
                                        <li><div class="row"><button class="toggle" aria-label="Aufklappen">+</button><svg class="icon" viewBox="0 0 16 16"><use href="#folder" /><path d="m5 12 6-6" stroke="#2f9a58" stroke-width="2.500" /><path d="M3.500 11h2v2h-2ZM10.500 5h2v2h-2Z" fill="#d22" /></svg>Beulsteifen</div></li>
                                        <li><div class="row"><button class="toggle" aria-label="Aufklappen">+</button><svg class="icon" viewBox="0 0 16 16"><use href="#folder" /><path d="m5 12 6-6" stroke="#2f9a58" stroke-width="2.500" /><path d="M3.500 11h2v2h-2ZM10.500 5h2v2h-2Z" fill="#d22" /></svg>Beulfelder</div></li>
                                    </ul>
                                </li>
                                <li>
                                    <div class="row"><button class="toggle" aria-label="Zuklappen">−</button><svg class="icon"><use href="#folderopen" /></svg>Lastfälle und Kombinationen</div>
                                    <ul>
                                        <li><div class="row"><button class="toggle" aria-label="Aufklappen">+</button><svg class="icon" viewBox="0 0 16 16"><path d="M0 14.500h14" stroke="#555" stroke-width="1.500" /><path d="M10 5h2v4h1.500L11 13.500 8.500 9H10Z" fill="#3a62c0" /></svg>Lastfälle</div></li>
                                        <li><div class="row"><span class="no-toggle"></span><svg class="icon"><use href="#combi" /></svg>Lastkombinationen</div></li>
                                    </ul>
                                </li>
                                <li><div class="row"><button class="toggle" aria-label="Aufklappen">+</button><svg class="icon"><use href="#folder" /></svg>Schnittgrößen</div></li>
                                <li><div class="row"><button class="toggle" aria-label="Aufklappen">+</button><svg class="icon"><use href="#folder" /></svg>Ergebnisse</div></li>
                                <li><div class="row"><span class="no-toggle"></span><svg class="icon"><use href="#folder" /></svg>Ausdruckprotokolle</div></li>
                                <li><div class="row"><button class="toggle" aria-label="Aufklappen">+</button><svg class="icon"><use href="#folder" /></svg>Hilfsobjekte</div></li>
                            </ul>
                        </li>
                    </ul>
                </div>
            </div>
            <div class="nav-tabs">
                <button class="active"><svg class="icon"><use href="#nav-data" /></svg>Daten</button>
                <button><svg class="icon"><use href="#nav-show" /></svg>Zeigen</button>
                <button><svg class="icon"><use href="#nav-view" /></svg>Ansichten</button>
            </div>
        </aside>

        <section class="content">
            <div class="canvas">
                <svg class="drawing" role="img" aria-label="Querschnitt">
                    <defs>
                        <pattern id="hatch" width="9" height="9" patternUnits="userSpaceOnUse">
                            <path d="M-1 10 10-1M-1 1 1-1M8 10l2-2" stroke="#111" stroke-width=".8" />
                        </pattern>
                        <pattern id="hatchRed" width="10" height="10" patternUnits="userSpaceOnUse">
                            <path d="M-1 11 11-1M-1 1 1-1M9 11l2-2" stroke="#900000" stroke-width=".9" />
                        </pattern>
                    </defs>
                    <g transform="translate(-291 -101)">
                        <!-- raster -->
                        <path class="raster" d="M427 131.500h1M690 131.500h1M954 131.500h1M1218 131.500h1M427 395.500h1M690 395.500h1M954 395.500h1M1218 395.500h1M1482 395.500h1M1746 395.500h1M427 659.500h1M690 659.500h1M954 659.500h1M1218 659.500h1M1746 659.500h1M427 923.500h1M690 923.500h1M954 923.500h1M1218 923.500h1M1482 923.500h1M1746 923.500h1M1746 131.500h1" />
                        <path class="centers" d="M1429 176.500h2M1442 312.500h2M1442 419.500h2M1429 641.500h2M1429 749.500h2M647 749.500h2" />
                        <path class="axis-line" d="M1483 101V965" />

                        <path class="middle" d="M1483 101V196M1482 197 1391 292M1390.500 292V430M1391.500 430 1481.500 629M1483 629V786M1467 802H617M607 793 523.500 562" />
                        <path class="middle" d="M1470 196.500h26M1473 191l18 17M1378 292.500h27M1382 281l19 17M1378 430.500h26M1379 436l24-9M1470 629.500h26M1470 634l25-10M1467 786h29M1467.500 786v29M617 791v24M596 800l21-8" />

                        <!-- web with hatching -->
                        <path class="web" d="M1469.500 101V176Q1469 194 1458 204L1397 266Q1377 283 1377.500 312.500V419Q1378 435 1384 447.500L1466 624Q1469 630 1469.500 641V749H1496V641Q1496 626 1490 612.500L1407.500 436Q1404 428 1404 419V312.500Q1404 295 1415.500 284.500L1477 223Q1496 204 1496 176V101" />
                        <!-- flange with hatching -->
                        <path class="flange" d="M511 566.500 535.500 558 610.500 762.500A40 40 0 0 0 647.500 788H1430A40 40 0 0 0 1469.500 749H1496A66 66 0 0 1 1430 815H647.500A66 66 0 0 1 585.500 771Z" />

                        <path class="joint" d="M1469.500 176.500h27M1458 204l19 19M1397 266l18.500 18.500M1377.500 312.500h27M1377.500 419.500h27M1384 447.500l23.500-11M1466 624l24-11M1469.500 641.500h27" />
                        <path class="joint red" d="M585.500 771l25-8.500M647.500 788v27M1430.500 788v27" />

                        <path class="ellipse" d="M1071.500 101V177L1075 230 1080 278 1088 325 1098 362 1111 393 1127 418 1145 434 1164 443 1187 446.500 1212 443 1240 431 1268 412 1296 389 1330 352 1359 317 1383 281 1397 262 1437 201 1466 150 1492 101" />
                        <path class="main-axis" d="M1263 101 1131 547" />

                        <path class="pts-cyan" d="M1470 176.500h0M1496 176.500h0M1467 191.500h0M1458 204h0M1491 202h0M1477 223h0M1427 235h0M1446 254h0M1397 266h0M1415.500 284.500h0M1382 287.500h0M1406.500 297.500h0M1377.500 312.500h0M1404 312.500h0M1377.500 366h0M1404 366h0M1377.500 419.500h0M1404 419.500h0M1405 428h0M1407.500 436h0M1379 434h0M1384 447.500h0M1425 535.500h0M1448.500 524.500h0M1466 624h0M1490 612.500h0M1469 632h0M1495 627h0M1470 641.500h0M1496 641.500h0M1470 695h0M1496 695h0" />
                        <path class="pts-brown" d="M1483 176.500h0M1479 196.500h0M1467.500 213.500h0M1406 275h0M1394.500 292.500h0M1390.500 312.500h0M1390.500 419.500h0M1391.500 430.500h0M1395.500 442h0M1478 618.500h0M1481.500 629.500h0M1483 641.500h0M1483 749h0M1467.500 786h0M1430 802h0M523.500 562h0M597.500 767h0M617 792h0M647.500 802h0" />
                        <path class="pts-red" d="M511 567h0M535.500 558h0M548 669h0M573 660h0M585.500 771h0M610.500 762.500h0M624.500 781.500h0M609.500 803h0M647.500 788.500h0M647.500 815h0M1039 788.500h0M1039 815h0M1430 788.500h0M1430 815h0M1458 777h0M1477 796h0M1470 749h0M1496 749h0" />

                        <!-- coordinate axes -->
                        <path d="M346 840H312" stroke="#00f000" stroke-width="2" />
                        <path d="m306 840 9-3v6Z" fill="#00c800" />
                        <path d="M346 840v34" stroke="#0000f0" stroke-width="2" />
                        <path d="m346 881-3-10h6Z" fill="#0000b0" />
                        <circle cx="346" cy="840" r="3" fill="#d00000" />
                        <text x="293" y="844" class="axis-y">Y</text>
                        <text x="343" y="894" class="axis-z">Z</text>
                    </g>
                </svg>
            </div>

            <div class="table-panel">
                <div class="panel-head">
                    <h2>1.9 Beulfelder</h2>
                    <button aria-label="Tabelle anheften"><svg><use href="#pin" /></svg></button>
                    <button aria-label="Tabelle schließen"><svg><use href="#close" /></svg></button>
                </div>
                <div class="panel-tools">
                    <button class="tool on" aria-label="Bearbeiten"><svg class="icon"><use href="#s-edit" /></svg></button>
                    <button class="tool" aria-label="Nummerieren"><svg class="icon"><use href="#s-num" /></svg></button>
                    <button class="tool" aria-label="Übernehmen"><svg class="icon"><use href="#s-down" /></svg></button>
                    <button class="tool" aria-label="Verlauf"><svg class="icon"><use href="#s-ramp" /></svg></button>
                    <button class="tool" aria-label="Querschnitt zeigen"><svg class="icon"><use href="#channel" /></svg></button>
                    <span class="sep"></span>
                    <button class="tool" aria-label="Vorherige Tabelle"><svg class="icon"><use href="#s-left" /></svg></button>
                    <button class="tool" aria-label="Nächste Tabelle"><svg class="icon"><use href="#s-right" /></svg></button>
                    <span class="sep"></span>
                    <button class="tool on" aria-label="Grafik zu Tabelle"><svg class="icon"><use href="#arcr" /></svg></button>
                    <button class="tool on" aria-label="Tabelle zu Grafik"><svg class="icon"><use href="#arcl" /></svg></button>
                    <button class="tool" aria-label="Synchronisieren"><svg class="icon"><use href="#sync" /></svg></button>
                    <span class="sep"></span>
                    <button class="tool" aria-label="Einfügen"><svg class="icon"><use href="#d-plus" /></svg></button>
                    <button class="tool" aria-label="Multiplizieren"><svg class="icon"><use href="#d-star" /></svg></button>
                    <button class="tool" aria-label="Dividieren"><svg class="icon"><use href="#d-dots" /></svg></button>
                    <span class="sep"></span>
                    <button class="tool" aria-label="Leeren"><svg class="icon"><use href="#d-x" /></svg></button>
                    <span class="sep"></span>
                    <button class="tool" aria-label="Zeile löschen"><svg class="icon"><use href="#r-x" /></svg></button>
                    <button class="tool" aria-label="Zeile einfügen"><svg class="icon"><use href="#r-left" /></svg></button>
                    <button class="tool" aria-label="Zeile verschieben"><svg class="icon"><use href="#r-right" /></svg></button>
                    <span class="sep"></span>
                    <button class="tool" aria-label="Kopfzeile"><svg class="icon"><use href="#y-head" /></svg></button>
                    <button class="tool" aria-label="Zeilen"><svg class="icon"><use href="#b-rows" /></svg></button>
                    <span class="sep"></span>
                    <button class="tool" aria-label="Farben"><svg class="icon"><use href="#s-pen" /></svg></button>
                    <span class="sep"></span>
                    <button class="tool" aria-label="Eigenschaften"><svg class="icon"><use href="#handlist" /></svg></button>
                    <button class="tool" aria-label="Suchen"><svg class="icon"><use href="#glasses" /></svg></button>
                    <button class="tool" aria-label="Excel"><svg class="icon"><use href="#excel" /></svg></button>
                    <button class="tool" aria-label="Rechner"><svg class="icon"><use href="#calc" /></svg></button>
                    <span class="sep"></span>
                    <button class="tool" aria-label="Parameter"><svg class="icon" viewBox="0 0 16 16"><use href="#win" /><text x="0" y="15" class="svg-ab">ab=</text></svg></button>
                    <button class="tool" aria-label="Formel"><svg class="icon" viewBox="0 0 16 16"><text x="2" y="13" class="svg-fx">fx</text></svg></button>
                    <button class="tool" aria-label="Formel löschen"><svg class="icon" viewBox="0 0 16 16"><text x="4" y="14" class="svg-fx small">fx</text><path d="m1 1 6 6M7 1 1 7" stroke="#dd6a70" stroke-width="2" /></svg></button>
                </div>

                <div class="grid">
                    <table>
                        <colgroup>
                            <col class="c-nr">
                            <col class="c-wide">
                            <col class="c-small">
                            <col class="c-wide">
                            <col class="c-wide">
                            <col class="c-small">
                            <col class="c-small">
                            <col>
                        </colgroup>
                        <thead>
                            <tr class="letters">
                                <th rowspan="2" class="corner">Beulfeld<br>Nr.</th>
                                <th class="sel">A</th>
                                <th>B</th>
                                <th>C</th>
                                <th>D</th>
                                <th>E</th>
                                <th>F</th>
                                <th>G</th>
                            </tr>
                            <tr class="names">
                                <th>Elemente Nr.</th>
                                <th>Beulfeld<br>Typ</th>
                                <th>Nennwerte der geraden Breiten</th>
                                <th>Steifen Nr.</th>
                                <th>Breite<br>b [mm]</th>
                                <th>Dicke<br>t [mm]</th>
                                <th>Kommentar</th>
                            </tr>
                        </thead>
                        <tbody>
                            <tr>
                                <th>1</th>
                                <td class="edit">15,3,16,4</td>
                                <td class="mid">Außen</td>
                                <td>3,4</td>
                                <td>1</td>
                                <td class="num">79.4</td>
                                <td class="num">2.0</td>
                                <td class="edit"></td>
                            </tr>
                            <tr>
                                <th>2</th>
                                <td class="edit">2,25,12,24,11,23,10,22,9,21,8,20,7,19</td>
                                <td class="mid">Innen</td>
                                <td>13-5</td>
                                <td>3,2</td>
                                <td class="num">225.0</td>
                                <td class="num">2.0</td>
                                <td class="edit"></td>
                            </tr>
                            <tr>
                                <th class="sel">3</th>
                                <td class="edit current">13,1,14,2</td>
                                <td class="mid">Außen</td>
                                <td>1,2</td>
                                <td>4</td>
                                <td class="num">69.0</td>
                                <td class="num">2.0</td>
                                <td class="edit"></td>
                            </tr>
                            <tr>
                                <th>4</th>
                                <td class="edit"></td>
                                <td></td>
                                <td></td>
                                <td></td>
                                <td></td>
                                <td></td>
                                <td></td>
                            </tr>
                        </tbody>
                    </table>
                    <div class="scrollbar">
                        <button aria-label="Nach oben"><svg viewBox="0 0 9 6"><path d="m1 5 3.500-3.500L8 5" /></svg></button>
                        <div class="thumb"></div>
                        <button aria-label="Nach unten"><svg viewBox="0 0 9 6"><path d="m1 1 3.500 3.500L8 1" /></svg></button>
                    </div>
                </div>

                <div class="sheet-tabs">
                    <button>Knoten</button>
                    <button>Materialien</button>
                    <button>Profile</button>
                    <button>Elemente</button>
                    <button>Punktelemente</button>
                    <button>Schweißnähte</button>
                    <button>Nennwerte der geraden Breiten nach EN 1993-1-3</button>
                    <button>Beulsteifen</button>
                    <button class="active">Beulfelder</button>
                </div>
                <div class="hint">Elemente Nr.</div>
            </div>
        </section>
    </main>

    <footer class="statusbar">
        <span class="message">Arbeitsebene</span>
        <div class="modes">
            <button class="m-fang">FANG</button>
            <button class="m-raster">RASTER</button>
            <button class="m-kartes">KARTES</button>
            <button class="m-raster">OFANG</button>
            <button class="m-kartes">HLINIEN</button>
            <button class="m-dxf">DXF</button>
        </div>
        <span class="ks">KS: Globales '</span>
        <span class="coord">Y:&nbsp; 53.7 mm</span>
        <span class="coord">Z:&nbsp; 77.5 mm</span>
    </footer>
</body>

</html>
```

FILE: styles.css
```css
* {
    margin: 0;
    padding: 0;
    box-sizing: border-box;
}

body {
    display: flex;
    flex-direction: column;
    height: 100vh;
    overflow: hidden;
    background: #d0d4dd;
    color: #000;
    font: 11px "Open Sans", "Noto Sans", sans-serif;
}

button {
    background: none;
    border: none;
    color: inherit;
    font: inherit;
}

h1,
h2 {
    font-size: 11px;
    font-weight: normal;
}

.sprite {
    position: absolute;
    width: 0;
    height: 0;
}

.icon {
    flex: none;
    width: 16px;
    height: 16px;
}

.flip {
    transform: scaleX(-1);
}

.logo {
    flex: none;
    width: 16px;
    height: 13px;
}

/* title bar */
.titlebar {
    display: flex;
    align-items: center;
    height: 23px;
    flex: none;
    padding: 0 2px;
    background: #0078d7;
    color: #fff;
}

.titlebar h1 {
    flex: 1;
    margin-left: 5px;
}

.window-buttons button {
    width: 45px;
    height: 22px;
}

.window-buttons svg {
    width: 10px;
    height: 10px;
}

/* menu */
.menubar {
    display: flex;
    align-items: center;
    height: 24px;
    flex: none;
    padding: 0 0 2px 1px;
    color: #50566a;
}

.menubar > .logo {
    margin-right: 3px;
}

.menubar > button {
    padding: 0 8px 0 7px;
}

.mdi-buttons {
    display: flex;
    margin: 8px 2px 0 auto;
    color: #666;
}

.mdi-buttons button {
    width: 16px;
    height: 12px;
}

.mdi-buttons svg {
    display: block;
    width: 8px;
    height: 8px;
    margin: auto;
}

/* toolbars */
.toolrow {
    display: flex;
    gap: 3px;
    height: 26px;
    flex: none;
    padding-left: 1px;
}

.toolbar {
    display: flex;
    align-items: center;
    height: 26px;
    padding: 1px 1px 0 0;
    border-bottom: 1px solid #9da3b0;
    border-radius: 3px;
    background: linear-gradient(#eaeef7, #e4e8f1 45%, #ced3dc);
}

.grip {
    flex: none;
    width: 9px;
    height: 16px;
    background: radial-gradient(circle, #a3a8b4 1px, transparent 2px) 3px 0 / 4px 4px repeat-y;
}

.sep {
    flex: none;
    width: 8px;
    height: 14px;
    background: linear-gradient(90deg, transparent 3px, #a5aab6 3px 4px, #fff 4px 5px, transparent 5px);
}

.tool {
    display: flex;
    align-items: center;
    justify-content: center;
    flex: none;
    width: 22px;
    height: 21px;
}

.tool.on {
    border: 1px solid #b5a27a;
    border-radius: 2px;
    background: linear-gradient(#fbd08c, #fbb95c 45%, #fff0b4);
}

.tool.faded {
    opacity: .5;
}

.drop {
    flex: none;
    width: 12px;
    height: 21px;
}

.drop::after,
.combo::after {
    content: "";
    display: block;
    width: 5px;
    height: 3px;
    margin: auto;
    background: #70757f;
    clip-path: polygon(0 0, 100% 0, 50% 100%);
}

.combo {
    position: relative;
    width: 154px;
    height: 19px;
    margin: 0 2px;
}

.combo select {
    appearance: none;
    width: 100%;
    height: 100%;
    padding-left: 2px;
    border: 1px solid #fff;
    border-radius: 0;
    background: linear-gradient(#e6e9f0, #ced3dc) right / 14px 100% no-repeat #fff;
    color: #000;
    font: inherit;
}

.combo::after {
    position: absolute;
    right: 5px;
    top: 8px;
    pointer-events: none;
}

.svg-small {
    font: bold 7px "Liberation Serif", serif;
}

.svg-val {
    font: bold 8px "Liberation Serif", serif;
    fill: #666;
}

.svg-res {
    font: 9px "Liberation Sans", sans-serif;
    fill: #777c86;
    text-anchor: middle;
}

.svg-res.dark {
    font-size: 7px;
    fill: #111;
}

.svg-ab {
    font: italic bold 9px "Liberation Serif", serif;
}

.svg-fx {
    font: italic 17px "Liberation Serif", serif;
    fill: #777c86;
}

.svg-fx.small {
    font-size: 14px;
}

/* workspace */
.workspace {
    display: flex;
    flex: 1;
    min-height: 0;
    gap: 4px;
}

.navigator {
    display: flex;
    flex-direction: column;
    width: 285px;
    flex: none;
    padding: 1px 0 0 1px;
}

.nav-head,
.panel-head {
    display: flex;
    align-items: center;
    height: 20px;
}

.nav-head {
    padding: 0 0 3px 2px;
    border: 1px solid #e4e8f0;
    background: #b9bfcb;
    color: #454a55;
}

.nav-head h2,
.panel-head h2 {
    flex: 1;
}

.nav-head button,
.panel-head button {
    width: 17px;
    height: 17px;
    color: #666;
}

.nav-head svg,
.panel-head svg {
    display: block;
    width: 9px;
    height: 9px;
    margin: auto;
}

.nav-frame {
    display: flex;
    flex: 1;
    min-height: 0;
    padding: 2px;
    border: 1px solid #a2a7b3;
    border-top: none;
    background: #e9edf6;
}

.tree {
    flex: 1;
    border-top: 1px solid #8b909b;
    border-left: 1px solid #8b909b;
    background: #fcfbf3;
    line-height: 18px;
    white-space: nowrap;
}

.root {
    display: flex;
    align-items: center;
    gap: 5px;
    height: 18px;
    padding-left: 2px;
}

.tree ul {
    list-style: none;
}

.tree > ul {
    margin-left: 6px;
}

.tree li {
    background:
        repeating-linear-gradient(#888 0 1px, transparent 1px 2px) 4px 0 / 1px 100% no-repeat,
        repeating-linear-gradient(90deg, #888 0 1px, transparent 1px 2px) 4px 9px / 12px 1px no-repeat;
}

.tree li:last-child {
    background:
        repeating-linear-gradient(#888 0 1px, transparent 1px 2px) 4px 0 / 1px 9px no-repeat,
        repeating-linear-gradient(90deg, #888 0 1px, transparent 1px 2px) 4px 9px / 12px 1px no-repeat;
}

.tree li ul {
    margin-left: 19px;
}

.tree strong {
    font-size: 12px;
}

.row {
    display: flex;
    align-items: center;
    height: 18px;
}

.row .icon {
    margin-right: 4px;
}

.toggle,
.no-toggle {
    flex: none;
    width: 9px;
    height: 9px;
    margin-right: 7px;
}

.toggle {
    border: 1px solid #9a9a9a;
    background: #fff;
    color: #2b4b9c;
    font: 9px "DejaVu Sans", sans-serif;
    line-height: 7px;
}

.nav-tabs {
    display: flex;
    align-items: flex-start;
    gap: 4px;
    height: 24px;
    padding: 0 3px;
    color: #565c6a;
}

.nav-tabs button {
    display: flex;
    align-items: center;
    gap: 1px;
    height: 22px;
    padding: 0 3px;
}

.nav-tabs .active {
    border: 1px solid #c4dede;
    border-top: none;
    border-radius: 0 0 4px 4px;
    background: #eff2f8;
}

.content {
    display: flex;
    flex-direction: column;
    flex: 1;
    min-width: 0;
}

.canvas {
    flex: 1;
    min-height: 0;
    margin-bottom: 5px;
    border: 2px solid #6b6b6b;
    border-right: 1px solid #dedede;
    border-bottom: 1px solid #dedede;
    background: #fff;
}

/* drawing */
.drawing {
    display: block;
    width: 100%;
    height: 100%;
    fill: none;
}

.raster {
    stroke: #000;
}

.centers {
    stroke: #e0c4c4;
    stroke-width: 2;
}

.axis-line {
    stroke: #b4dcda;
    stroke-width: 2;
}

.web {
    fill: url(#hatch);
    stroke: #9a9a9a;
}

.flange {
    fill: url(#hatchRed);
    stroke: #e83030;
}

.middle {
    stroke: #a0a0a4;
    stroke-width: 3;
}

.joint {
    stroke: #777;
}

.joint.red {
    stroke: #e00000;
}

.ellipse {
    stroke: #2020e8;
}

.main-axis {
    stroke: #30eef0;
}

.pts-cyan,
.pts-brown,
.pts-red {
    stroke-width: 4;
    stroke-linecap: square;
}

.pts-cyan {
    stroke: #00f4f8;
}

.pts-brown {
    stroke: #800000;
    stroke-width: 3;
}

.pts-red {
    stroke: #ff0000;
}

.axis-y,
.axis-z {
    font: 10px "Liberation Sans", sans-serif;
    fill: #00e000;
}

.axis-z {
    fill: #0000e0;
}

/* table panel */
.table-panel {
    background: #efefef;
}

.panel-head {
    padding: 0 2px 1px 4px;
    background: #e9edf6;
    color: #50566a;
}

.panel-tools {
    display: flex;
    align-items: center;
    height: 25px;
    padding: 0 0 2px 9px;
    background: linear-gradient(#e9edf6, #ced3dc);
}

.grid {
    display: flex;
    align-items: flex-start;
    height: 127px;
    padding: 2px 2px 0 1px;
    border: 1px solid #6b6b6b;
    border-bottom-width: 2px;
    font: 11px "Liberation Sans", Arial, sans-serif;
}

table {
    flex: 1;
    width: 100%;
    table-layout: fixed;
    border-collapse: collapse;
}

.c-nr {
    width: 46px;
}

.c-wide {
    width: 192px;
}

.c-small {
    width: 84px;
}

th,
td {
    height: 16px;
    border: 1px solid #a0a0a0;
    line-height: 14px;
    white-space: nowrap;
}

th {
    font-weight: normal;
}

td {
    padding: 0 4px 1px;
}

tbody th {
    padding-bottom: 1px;
}

.letters th,
tbody th,
.corner {
    border-color: #6b6b6b;
    background: #e1e1e1;
    box-shadow: inset 1px 1px #fff, inset -1px -1px #a0a0a0;
}

.letters th {
    height: 15px;
    line-height: 13px;
}

.letters .corner {
    padding-bottom: 7px;
    font-family: Roboto, sans-serif;
    vertical-align: bottom;
}

.names th {
    height: 32px;
    font-family: Roboto, sans-serif;
    line-height: 15px;
    padding-bottom: 2px;
    vertical-align: bottom;
}

.letters .sel,
tbody .sel {
    background: #3399ff;
    color: #fff;
}

.edit {
    background: #fff;
}

.current {
    outline: 1px solid #000;
    outline-offset: -1px;
}

.mid {
    text-align: center;
}

.num {
    text-align: right;
}

.scrollbar {
    display: flex;
    flex-direction: column;
    width: 16px;
    height: 112px;
    flex: none;
    border-right: 1px solid #c8c8c8;
}

.scrollbar button {
    height: 17px;
}

.scrollbar svg {
    display: block;
    width: 9px;
    height: 6px;
    margin: auto;
    fill: none;
    stroke: #555;
    stroke-width: 2;
}

.thumb {
    flex: 1;
    background: #cdcdcd;
}

.sheet-tabs {
    display: flex;
    height: 17px;
    font: 11px Roboto, "Liberation Sans", sans-serif;
}

.sheet-tabs button {
    height: 16px;
    padding: 0 5px 0 3px;
    border: 1px solid #6b6b6b;
    border-top: none;
    border-left-color: #a0a0a0;
    border-radius: 0 0 4px 4px;
    background: #e1e1e1;
}

.sheet-tabs .active {
    border-left-color: #fff;
    background: #efefef;
}

.hint {
    height: 18px;
    padding-left: 1px;
    border-top: 1px solid #d6d6d6;
    line-height: 18px;
}

/* status bar */
.statusbar {
    display: flex;
    align-items: stretch;
    height: 21px;
    flex: none;
    padding: 1px 12px 0 4px;
    border-top: 1px solid #9da2ae;
    background: linear-gradient(#d4d7df, #b6bac4 45%, #a9adb8 46%, #bfc3cc);
    color: #2c3038;
    font: 11px "Liberation Sans", Arial, sans-serif;
    line-height: 19px;
}

.message {
    flex: 1;
    font-family: Roboto, sans-serif;
}

.modes {
    display: flex;
    gap: 2px;
    padding-right: 1px;
    border-right: 1px solid #8f949f;
}

.modes button {
    border: 1px solid #fff;
    border-top-color: #222;
    border-left-color: #222;
    border-bottom: none;
}

.m-fang {
    width: 37px;
}

.m-raster {
    width: 47px;
}

.m-kartes {
    width: 50px;
}

.m-dxf {
    width: 29px;
}

.ks {
    width: 151px;
    padding-left: 84px;
    white-space: nowrap;
}

.coord {
    width: 73px;
    padding-left: 2px;
    border-left: 1px solid #8f949f;
    font-family: Roboto, sans-serif;
    white-space: nowrap;
}

.coord:last-child {
    width: 62px;
}
```
